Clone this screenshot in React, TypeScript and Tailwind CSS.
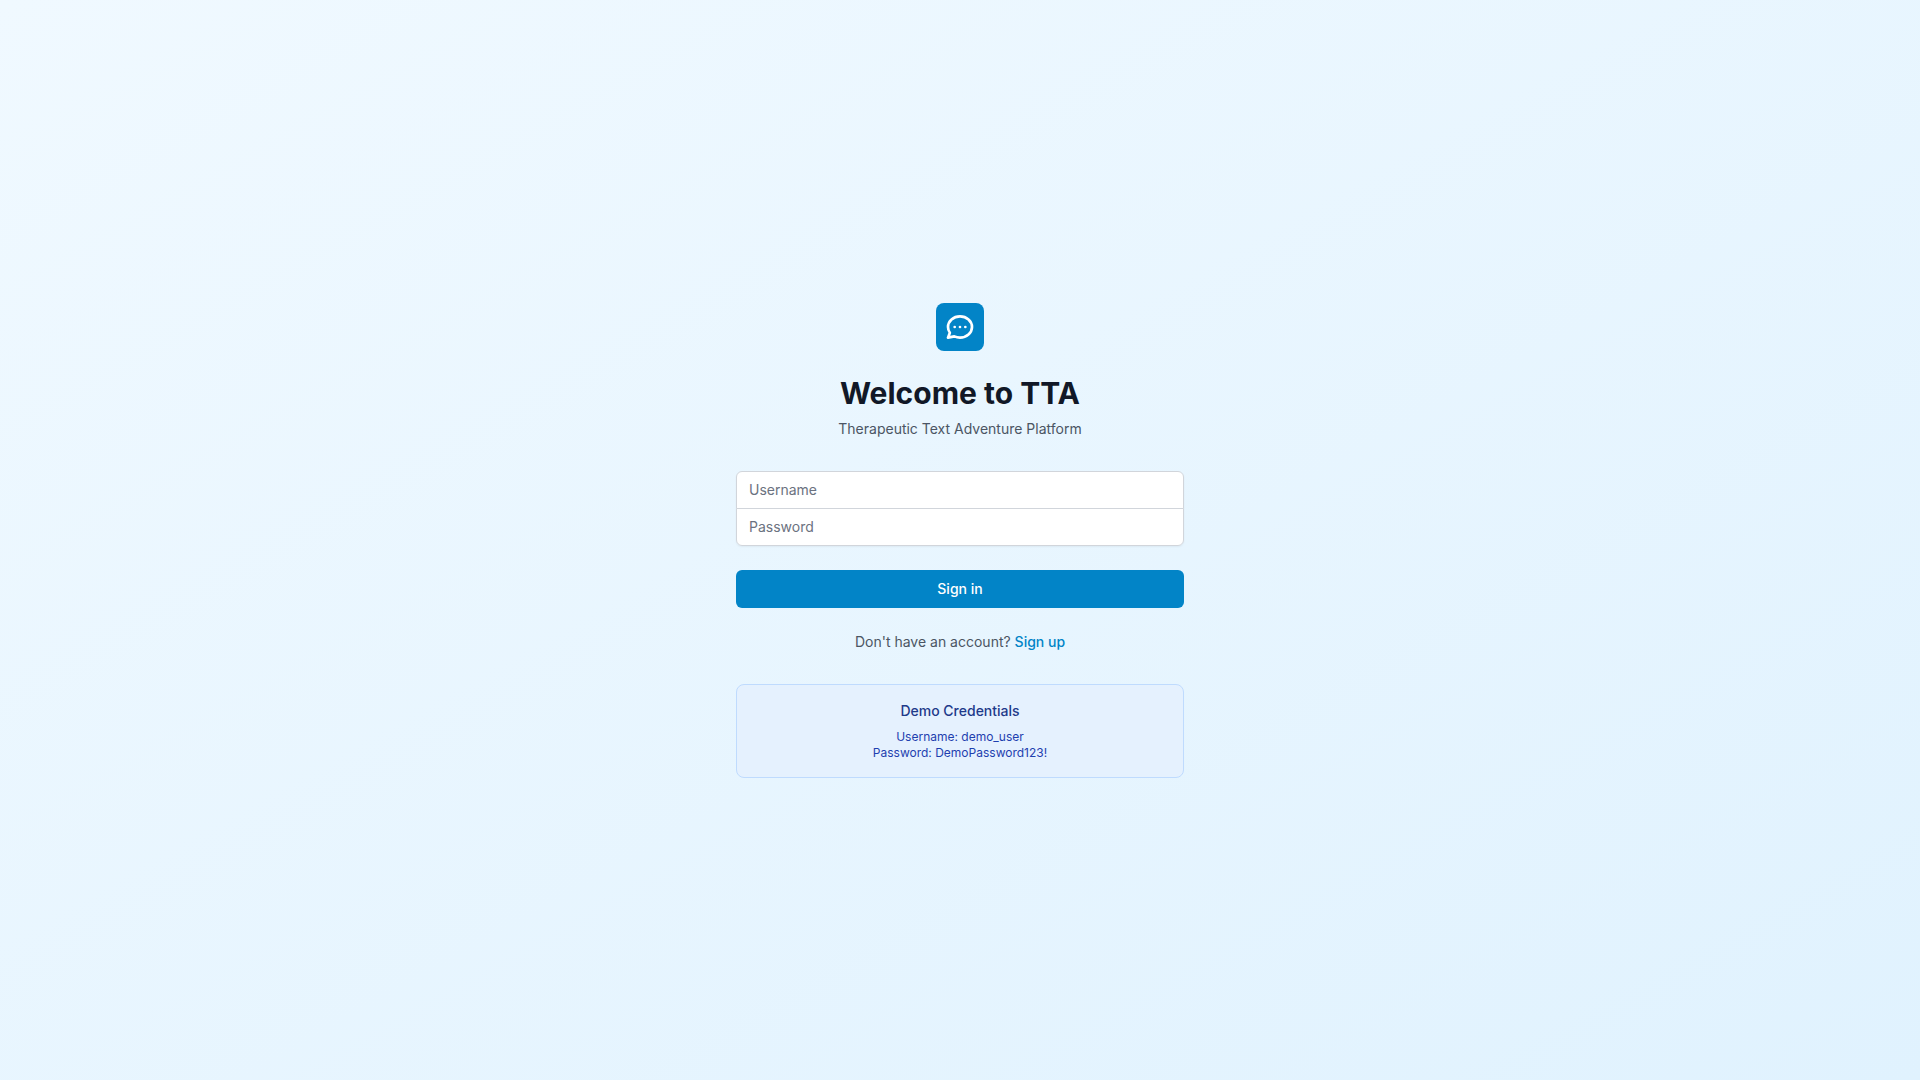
import { useState } from "react";

export default function App() {
  const [username, setUsername] = useState("");
  const [password, setPassword] = useState("");

  const fieldClass =
    "relative block w-full border border-[#d1d5db] bg-white px-3 py-2 text-sm text-[#111827] placeholder-[#6b7280] focus:z-10 focus:border-[#0ea5e9] focus:outline-none";

  return (
    <main className="flex min-h-screen items-center justify-center bg-linear-to-br/srgb from-[#f0f9ff] to-[#e0f2fe] px-8 py-12 font-['Inter',sans-serif]">
      <div className="w-full max-w-md space-y-8">
        <header className="text-center">
          <div className="mx-auto flex size-12 items-center justify-center rounded-lg bg-[#0284c7]">
            <svg className="size-8 text-white" fill="none" viewBox="0 0 24 24" stroke="currentColor" aria-hidden="true">
              <path
                strokeLinecap="round"
                strokeLinejoin="round"
                strokeWidth={2}
                d="M8 12h.01M12 12h.01M16 12h.01M21 12c0 4.418-4.03 8-9 8a9.863 9.863 0 01-4.255-.949L3 20l1.395-3.72C3.512 15.042 3 13.574 3 12c0-4.418 4.03-8 9-8s9 3.582 9 8z"
              />
            </svg>
          </div>
          <h1 className="mt-6 text-3xl font-bold text-[#111827]">Welcome to TTA</h1>
          <p className="mt-2 text-sm text-[#4b5563]">Therapeutic Text Adventure Platform</p>
        </header>

        <form className="space-y-6" onSubmit={(event) => event.preventDefault()}>
          <div className="-space-y-px rounded-md shadow-xs">
            <input
              type="text"
              aria-label="Username"
              placeholder="Username"
              autoComplete="username"
              value={username}
              onChange={(event) => setUsername(event.target.value)}
              className={`${fieldClass} rounded-t-md`}
            />
            <input
              type="password"
              aria-label="Password"
              placeholder="Password"
              autoComplete="current-password"
              value={password}
              onChange={(event) => setPassword(event.target.value)}
              className={`${fieldClass} rounded-b-md`}
            />
          </div>

          <button
            type="submit"
            className="flex w-full justify-center rounded-md border border-transparent bg-[#0284c7] px-4 py-2 text-sm font-medium text-white hover:bg-[#0369a1]"
          >
            Sign in
          </button>

          <p className="text-center text-sm text-[#4b5563]">
            Don't have an account?{" "}
            <a href="#signup" className="font-medium text-[#0284c7] hover:text-[#0ea5e9]">Sign up</a>
          </p>
        </form>

        <section className="rounded-lg border border-[#bfdbfe] bg-[#e5f1fe] p-4 text-center">
          <h2 className="mb-2 text-sm font-medium text-[#1e3a8a]">Demo Credentials</h2>
          <p className="text-xs text-[#1e40af]">Username: demo_user</p>
          <p className="text-xs text-[#1e40af]">Password: DemoPassword123!</p>
        </section>
      </div>
    </main>
  );
}
